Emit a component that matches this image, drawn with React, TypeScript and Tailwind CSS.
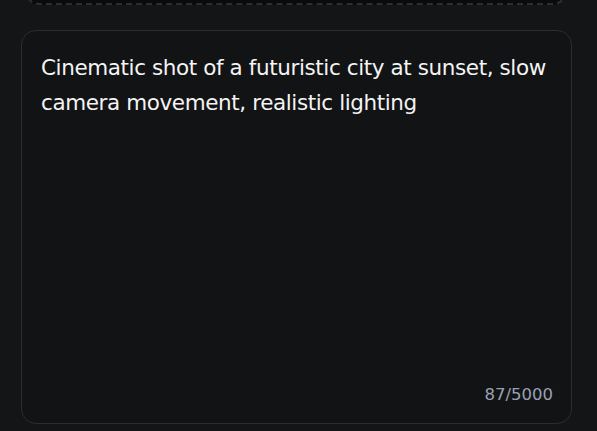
import { useState } from 'react';

const MAX_CHARS = 5000;

export default function App() {
  const [prompt, setPrompt] = useState(
    'Cinematic shot of a futuristic city at sunset, slow camera movement, realistic lighting'
  );

  return (
    <div className="h-[431px] overflow-hidden bg-[#141517] pl-[21px] pr-[25px] font-['DejaVu_Sans','Liberation_Sans',sans-serif]">
      {/* upload zone, scrolled mostly out of view */}
      <div className="ml-[4px] mr-[5px] -mt-[100px] h-[105px] rounded-[14px] border-2 border-dashed border-[#2c2e33] bg-[#0b0b0c]" />

      {/* prompt box */}
      <div className="mt-[25px] flex h-[394px] flex-col rounded-[15px] border border-[#2b2d31] bg-[#121315] pl-[19px] pr-[18px] pt-[19px] pb-[18px]">
        <textarea
          value={prompt}
          onChange={e => setPrompt(e.target.value.slice(0, MAX_CHARS))}
          className="flex-1 resize-none bg-transparent text-[21.5px] leading-[35px] tracking-[-0.4px] text-[#f4f4f4] outline-none"
        />
        <div className="text-right text-[16.5px] leading-[20px] text-[#9aa1b3]">
          {prompt.length}/{MAX_CHARS}
        </div>
      </div>
    </div>
  );
}
